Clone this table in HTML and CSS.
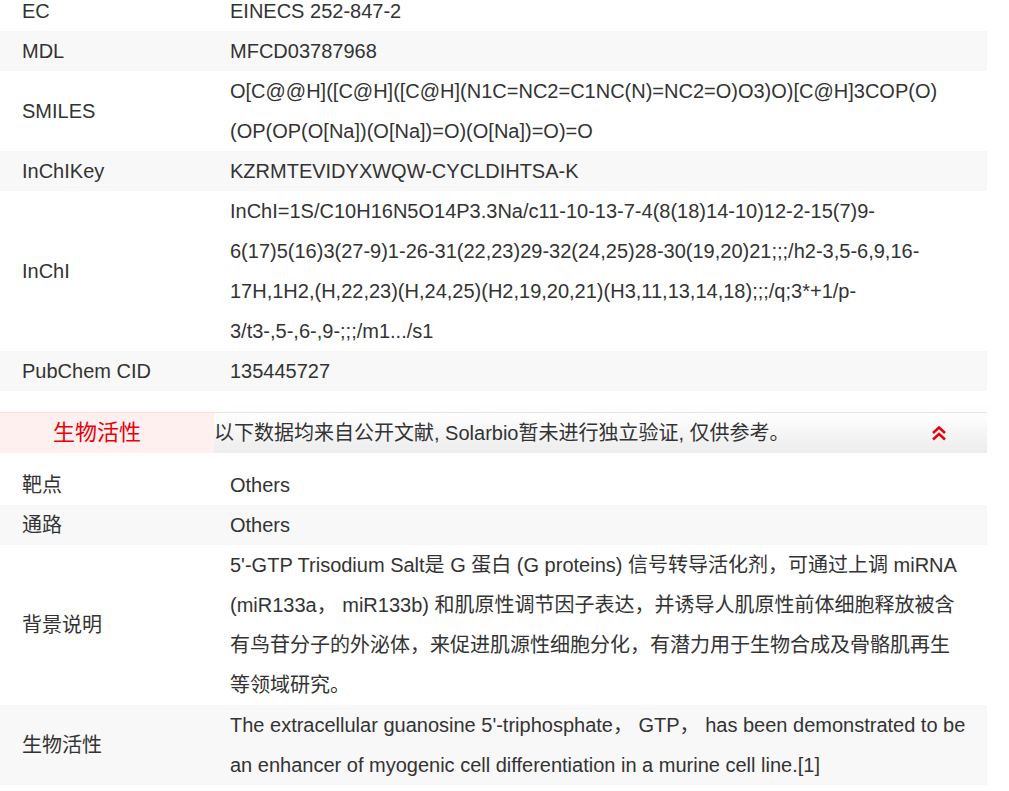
FILE: index.html
```html
<!DOCTYPE html>
<html lang="zh-CN">
<head>
<meta charset="utf-8">
<title>5'-GTP Trisodium Salt</title>
<link rel="stylesheet" href="styles.css">
</head>
<body>
<div class="page">
  <div class="table">
    <div class="row"><div class="label">EC</div><div class="value">EINECS 252-847-2</div></div>
    <div class="row alt"><div class="label">MDL</div><div class="value">MFCD03787968</div></div>
    <div class="row"><div class="label">SMILES</div><div class="value">O[C@@H]([C@H]([C@H](N1C=NC2=C1NC(N)=NC2=O)O3)O)[C@H]3COP(O)(OP(OP(O[Na])(O[Na])=O)(O[Na])=O)=O</div></div>
    <div class="row alt"><div class="label">InChIKey</div><div class="value">KZRMTEVIDYXWQW-CYCLDIHTSA-K</div></div>
    <div class="row"><div class="label">InChI</div><div class="value">InChI=1S/C10H16N5O14P3.3Na/c11-10-13-7-4(8(18)14-10)12-2-15(7)9-6(17)5(16)3(27-9)1-26-31(22,23)29-32(24,25)28-30(19,20)21;;;/h2-3,5-6,9,16-17H,1H2,(H,22,23)(H,24,25)(H2,19,20,21)(H3,11,13,14,18);;;/q;3*+1/p-3/t3-,5-,6-,9-;;;/m1.../s1</div></div>
    <div class="row alt"><div class="label">PubChem CID</div><div class="value">135445727</div></div>
  </div>

  <div class="section-head">
    <div class="section-title">生物活性</div>
    <div class="section-note">
      <span>以下数据均来自公开文献, Solarbio暂未进行独立验证, 仅供参考。</span>
      <svg class="chev" width="16" height="16" viewBox="0 0 16 16" aria-hidden="true">
        <polyline points="2,8 8,2.5 14,8" fill="none" stroke="#e8000b" stroke-width="2.5"/>
        <polyline points="2,14.5 8,9 14,14.5" fill="none" stroke="#e8000b" stroke-width="2.5"/>
      </svg>
    </div>
  </div>

  <div class="table">
    <div class="row"><div class="label">靶点</div><div class="value">Others</div></div>
    <div class="row alt"><div class="label">通路</div><div class="value">Others</div></div>
    <div class="row"><div class="label">背景说明</div><div class="value">5'-GTP Trisodium Salt是 G 蛋白 (G proteins) 信号转导活化剂，可通过上调 miRNA (miR133a， miR133b) 和肌原性调节因子表达，并诱导人肌原性前体细胞释放被含有鸟苷分子的外泌体，来促进肌源性细胞分化，有潜力用于生物合成及骨骼肌再生等领域研究。</div></div>
    <div class="row alt"><div class="label">生物活性</div><div class="value">The extracellular guanosine 5'-triphosphate， GTP， has been demonstrated to be an enhancer of myogenic cell differentiation in a murine cell line.[1]</div></div>
  </div>
</div>
</body>
</html>
```

FILE: styles.css
```css
html, body {
  margin: 0;
  padding: 0;
  background: #fff;
}

body {
  font-family: "Liberation Sans", Arial, "Noto Sans CJK SC", sans-serif;
  font-size: 20px;
  color: #333;
}

.page {
  width: 987px;
  margin-top: -9px;
}

.table {
  display: flex;
  flex-direction: column;
}

.row {
  display: grid;
  grid-template-columns: 230px 1fr;
  align-items: center;
  line-height: 40px;
  background: #fff;
}

.row.alt {
  background: #f8f8f8;
}

.label {
  padding-left: 22px;
}

.value {
  padding-right: 20px;
  word-wrap: break-word;
}

.section-head {
  margin-top: 21px;
  margin-bottom: 12px;
  border-top: 1px solid #fddcdc;
  display: flex;
  height: 40px;
}

.section-title {
  width: 161px;
  padding-left: 53px;
  background: #fff0f0;
  color: #e8000b;
  font-size: 22px;
  line-height: 40px;
}

.section-note {
  flex: 1;
  display: flex;
  align-items: center;
  justify-content: space-between;
  padding-right: 40px;
  background: linear-gradient(to bottom, #ffffff, #ececec);
  font-size: 20px;
  line-height: 40px;
  color: #333;
}

.chev {
  display: block;
}
```
